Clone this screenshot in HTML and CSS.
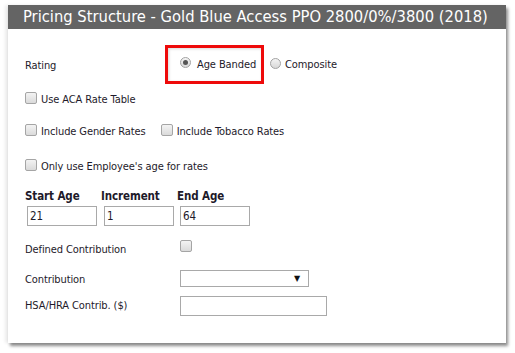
FILE: index.html
```html
<!DOCTYPE html>
<html>
<head>
<meta charset="utf-8">
<link rel="stylesheet" href="styles.css">
</head>
<body>
<div class="panel">
  <div class="header">Pricing Structure - Gold Blue Access PPO 2800/0%/3800 (2018)</div>
  <div class="form">
    <div class="row rating-row">
      <span class="label-col">Rating</span>
      <span class="highlight"><span class="radio checked"></span><span class="txt">Age Banded</span></span>
      <span class="radio comp"></span><span class="txt">Composite</span>
    </div>
    <div class="row aca-row">
      <span class="check"></span><span class="txt">Use ACA Rate Table</span>
    </div>
    <div class="row gender-row">
      <span class="check"></span><span class="txt">Include Gender Rates</span>
      <span class="check tob"></span><span class="txt">Include Tobacco Rates</span>
    </div>
    <div class="row emp-row">
      <span class="check"></span><span class="txt">Only use Employee's age for rates</span>
    </div>
    <div class="age-grid">
      <span class="bold">Start Age</span>
      <span class="bold">Increment</span>
      <span class="bold">End Age</span>
      <span class="box">21</span>
      <span class="box">1</span>
      <span class="box">64</span>
    </div>
    <div class="row dc-row">
      <span class="label-col txt">Defined Contribution</span>
      <span class="check dc"></span>
    </div>
    <div class="row contrib-row">
      <span class="label-col txt">Contribution</span>
      <span class="select"><span class="arrow">▼</span></span>
    </div>
    <div class="row hsa-row">
      <span class="label-col">HSA/HRA Contrib. ($)</span>
      <span class="box wide"></span>
    </div>
  </div>
</div>
</body>
</html>
```

FILE: styles.css
```css
html, body {
  margin: 0;
  padding: 0;
  background: #ffffff;
}
body {
  width: 515px;
  height: 353px;
  overflow: hidden;
  font-family: "DejaVu Sans Condensed", "DejaVu Sans", sans-serif;
  font-stretch: condensed;
  font-size: 11px;
  letter-spacing: -0.1px;
  color: #1e1a2a;
}
.panel {
  margin: 5px 0 0 8px;
  width: 498px;
  height: 338px;
  background: #fff;
  box-shadow: 2px 3px 3px rgba(0,0,0,0.45), -3px 0 3px rgba(0,0,0,0.08);
}
.header {
  height: 24px;
  line-height: 24px;
  background: #646464;
  color: #ffffff;
  font-size: 16.4px;
  letter-spacing: 0;
  padding-left: 15px;
  white-space: nowrap;
}
.form {
  padding-left: 17px;
  display: flex;
  flex-direction: column;
}
.row {
  display: flex;
  align-items: center;
  height: 14px;
  line-height: 14px;
}
.txt {
  margin-top: 2px;
}
.label-col {
  width: 155px;
  flex: none;
}
.rating-row {
  margin-top: 16px;
  height: 39px;
}
.rating-row .label-col {
  width: 140px;
  padding-top: 2px;
}
.highlight {
  display: flex;
  align-items: center;
  box-sizing: border-box;
  width: 99px;
  height: 39px;
  border: 3px solid #ee0a0a;
  padding-left: 12px;
  box-shadow: inset 1px 1px 3px rgba(0,0,0,0.15);
}
.highlight .txt { margin-top: 0; }
.radio {
  width: 11px;
  height: 11px;
  box-sizing: border-box;
  border-radius: 50%;
  border: 1px solid #a2a2a2;
  background: linear-gradient(#f4f4f4, #d8d8d8);
  display: inline-flex;
  align-items: center;
  justify-content: center;
  flex: none;
  margin-right: 6px;
  margin-top: -4px;
}
.radio.checked::after {
  content: "";
  width: 5px;
  height: 5px;
  border-radius: 50%;
  background: #555;
}
.radio.comp {
  margin-left: 6px;
  margin-right: 4px;
  margin-top: -3px;
}
.rating-row > .txt { margin-top: 1px; }
.check {
  width: 12px;
  height: 12px;
  box-sizing: border-box;
  border: 1px solid #a5a5a5;
  border-radius: 2px;
  background: linear-gradient(#f3f3f3, #dadada);
  flex: none;
  margin-right: 4px;
  margin-top: -3px;
}
.check.tob {
  margin-left: 15px;
}
.aca-row { margin-top: 8px; }
.gender-row { margin-top: 18px; }
.emp-row { margin-top: 21px; }
.age-grid {
  margin-top: 15px;
  display: grid;
  grid-template-columns: 76px 76px 76px;
  grid-template-rows: 15px 20px;
  row-gap: 3px;
  line-height: 14px;
}
.bold {
  font-weight: bold;
  font-size: 11.5px;
  padding-top: 1px;
}
.box {
  box-sizing: border-box;
  width: 70px;
  height: 20px;
  border: 1px solid #a9a9a9;
  margin-left: 2px;
  padding-left: 2px;
  line-height: 18px;
  font-size: 11.5px;
}
.age-grid .box:nth-child(5) { margin-left: 3px; }
.age-grid .box:nth-child(6) { margin-left: 3px; }
.dc-row { margin-top: 16px; }
.check.dc { margin-top: -7px; }
.contrib-row {
  margin-top: 14px;
  height: 17px;
}
.select {
  box-sizing: border-box;
  width: 129px;
  height: 17px;
  border: 1px solid #a9a9a9;
  display: flex;
  justify-content: flex-end;
  align-items: center;
  padding-right: 8px;
}
.arrow {
  font-family: "DejaVu Sans", sans-serif;
  font-stretch: normal;
  font-size: 8px;
  line-height: 8px;
  color: #111;
}
.hsa-row {
  margin-top: 9px;
  height: 20px;
}
.box.wide {
  width: 147px;
  margin-left: 0;
}
```
